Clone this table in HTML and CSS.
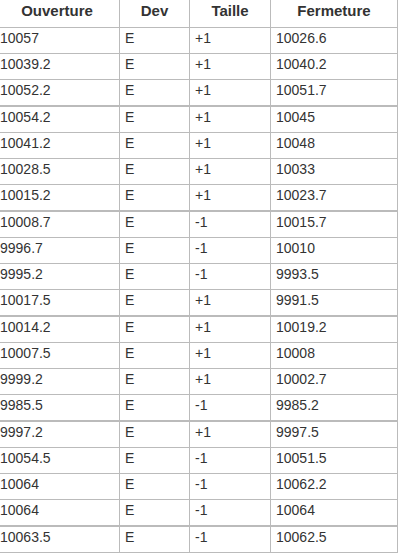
FILE: index.html
```html
<!DOCTYPE html>
<html lang="fr">
<head>
<meta charset="utf-8">
<title>Transactions</title>
<link rel="stylesheet" href="styles.css">
</head>
<body>
<table class="trades">
  <thead>
    <tr>
      <th class="c-open">Ouverture</th>
      <th class="c-dev">Dev</th>
      <th class="c-size">Taille</th>
      <th class="c-close">Fermeture</th>
    </tr>
  </thead>
  <tbody>
    <tr><td>10057</td><td>E</td><td>+1</td><td>10026.6</td></tr>
    <tr><td>10039.2</td><td>E</td><td>+1</td><td>10040.2</td></tr>
    <tr><td>10052.2</td><td>E</td><td>+1</td><td>10051.7</td></tr>
    <tr><td>10054.2</td><td>E</td><td>+1</td><td>10045</td></tr>
    <tr><td>10041.2</td><td>E</td><td>+1</td><td>10048</td></tr>
    <tr><td>10028.5</td><td>E</td><td>+1</td><td>10033</td></tr>
    <tr><td>10015.2</td><td>E</td><td>+1</td><td>10023.7</td></tr>
    <tr><td>10008.7</td><td>E</td><td>-1</td><td>10015.7</td></tr>
    <tr><td>9996.7</td><td>E</td><td>-1</td><td>10010</td></tr>
    <tr><td>9995.2</td><td>E</td><td>-1</td><td>9993.5</td></tr>
    <tr><td>10017.5</td><td>E</td><td>+1</td><td>9991.5</td></tr>
    <tr><td>10014.2</td><td>E</td><td>+1</td><td>10019.2</td></tr>
    <tr><td>10007.5</td><td>E</td><td>+1</td><td>10008</td></tr>
    <tr><td>9999.2</td><td>E</td><td>+1</td><td>10002.7</td></tr>
    <tr><td>9985.5</td><td>E</td><td>-1</td><td>9985.2</td></tr>
    <tr><td>9997.2</td><td>E</td><td>+1</td><td>9997.5</td></tr>
    <tr><td>10054.5</td><td>E</td><td>-1</td><td>10051.5</td></tr>
    <tr><td>10064</td><td>E</td><td>-1</td><td>10062.2</td></tr>
    <tr><td>10064</td><td>E</td><td>-1</td><td>10064</td></tr>
    <tr><td>10063.5</td><td>E</td><td>-1</td><td>10062.5</td></tr>
  </tbody>
</table>
</body>
</html>
```
FILE: styles.css
```css
html, body {
  margin: 0;
  padding: 0;
  background: #ffffff;
}

.trades {
  border-collapse: separate;
  border-spacing: 0;
  table-layout: fixed;
  width: 403px;
  margin-left: -5px;
  font-family: "Liberation Sans", Arial, sans-serif;
  color: #333333;
}

.trades th,
.trades td {
  box-sizing: border-box;
  border-right: 1px solid #bbbbbb;
  border-bottom: 1px solid #bbbbbb;
}

.trades th {
  font-size: 15px;
  font-weight: bold;
  line-height: 17px;
  height: 28px;
  padding: 2px 5px 8px;
  text-align: center;
}

.trades .c-open { width: 125px; }
.trades .c-dev { width: 70px; }
.trades .c-size { width: 81px; }
.trades .c-close { width: 127px; }

.trades td {
  font-size: 14px;
  line-height: 17px;
  height: 26px;
  padding: 2px 5px 6px;
  text-align: left;
  white-space: nowrap;
}

.trades tbody tr:nth-child(4n+3) td {
  height: 27px;
  border-bottom-width: 2px;
}
```
